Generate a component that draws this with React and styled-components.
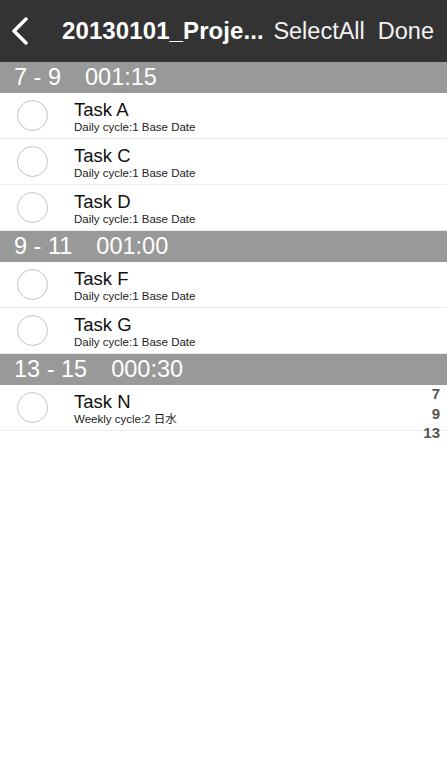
import React from 'react';
import styled, { createGlobalStyle } from 'styled-components';

const GlobalStyle = createGlobalStyle`
  html, body {
    margin: 0;
    padding: 0;
    background: #ffffff;
    font-family: "Liberation Sans", Arial, "Noto Sans CJK JP", sans-serif;
  }
`;

const Screen = styled.div`
  position: relative;
  width: 447px;
  height: 767px;
  background: #ffffff;
  overflow: hidden;
`;

const NavBar = styled.div`
  height: 62px;
  background: #333333;
  display: flex;
  align-items: center;
  padding: 0 13px 0 10px;
  box-sizing: border-box;
  color: #ffffff;
`;

const BackButton = styled.div`
  width: 40px;
  height: 30px;
  display: flex;
  align-items: center;
  margin-right: 12px;
`;

const NavTitle = styled.div`
  font-size: 24px;
  font-weight: 700;
  letter-spacing: 0.1px;
  flex: 1;
  white-space: nowrap;
`;

const NavAction = styled.div`
  font-size: 23.5px;
  font-weight: 400;
  color: #f2f2f2;
  margin-left: ${p => p.gap || 0}px;
`;

const SectionHeader = styled.div`
  height: 31px;
  background: #999999;
  color: #ffffff;
  font-size: 23.5px;
  display: flex;
  align-items: center;
  gap: 24px;
  padding-left: 14px;
  white-space: pre;
`;

const Row = styled.div`
  height: 46px;
  display: flex;
  align-items: center;
  border-bottom: 1px solid #ececec;
  box-sizing: border-box;
`;

const Check = styled.div`
  width: 29px;
  height: 29px;
  border-radius: 50%;
  border: 1px solid #c4c4c4;
  margin-left: 17px;
  margin-right: 26px;
  flex-shrink: 0;
`;

const Texts = styled.div`
  display: flex;
  flex-direction: column;
`;

const TaskName = styled.div`
  font-size: 18.5px;
  color: #111111;
  line-height: 20px;
  margin-top: 2px;
`;

const TaskSub = styled.div`
  font-size: 11.5px;
  color: #222222;
  line-height: 14px;
`;

const IndexBar = styled.div`
  position: absolute;
  right: 7px;
  top: 384px;
  display: flex;
  flex-direction: column;
  align-items: flex-end;
  font-size: 15px;
  font-weight: 700;
  color: #555555;
  line-height: 19.5px;
`;

const sections = [
  {
    range: '7 - 9',
    time: '001:15',
    tasks: [
      { name: 'Task A', sub: 'Daily cycle:1 Base Date' },
      { name: 'Task C', sub: 'Daily cycle:1 Base Date' },
      { name: 'Task D', sub: 'Daily cycle:1 Base Date' },
    ],
  },
  {
    range: '9 - 11',
    time: '001:00',
    tasks: [
      { name: 'Task F', sub: 'Daily cycle:1 Base Date' },
      { name: 'Task G', sub: 'Daily cycle:1 Base Date' },
    ],
  },
  {
    range: '13 - 15',
    time: '000:30',
    tasks: [{ name: 'Task N', sub: 'Weekly cycle:2 日水' }],
  },
];

const App = () => (
  <Screen>
    <GlobalStyle />
    <NavBar>
      <BackButton>
        <svg width="20" height="28" viewBox="0 0 20 28">
          <path d="M16 2 L4 14 L16 26" fill="none" stroke="#ffffff" strokeWidth="3.5" strokeLinecap="round" strokeLinejoin="round" />
        </svg>
      </BackButton>
      <NavTitle>20130101_Proje...</NavTitle>
      <NavAction>SelectAll</NavAction>
      <NavAction gap={13}>Done</NavAction>
    </NavBar>
    {sections.map(section => (
      <div key={section.range}>
        <SectionHeader>
          <span>{section.range}</span>
          <span>{section.time}</span>
        </SectionHeader>
        {section.tasks.map(task => (
          <Row key={task.name}>
            <Check />
            <Texts>
              <TaskName>{task.name}</TaskName>
              <TaskSub>{task.sub}</TaskSub>
            </Texts>
          </Row>
        ))}
      </div>
    ))}
    <IndexBar>
      <span>7</span>
      <span>9</span>
      <span>13</span>
    </IndexBar>
  </Screen>
);

export default App;
